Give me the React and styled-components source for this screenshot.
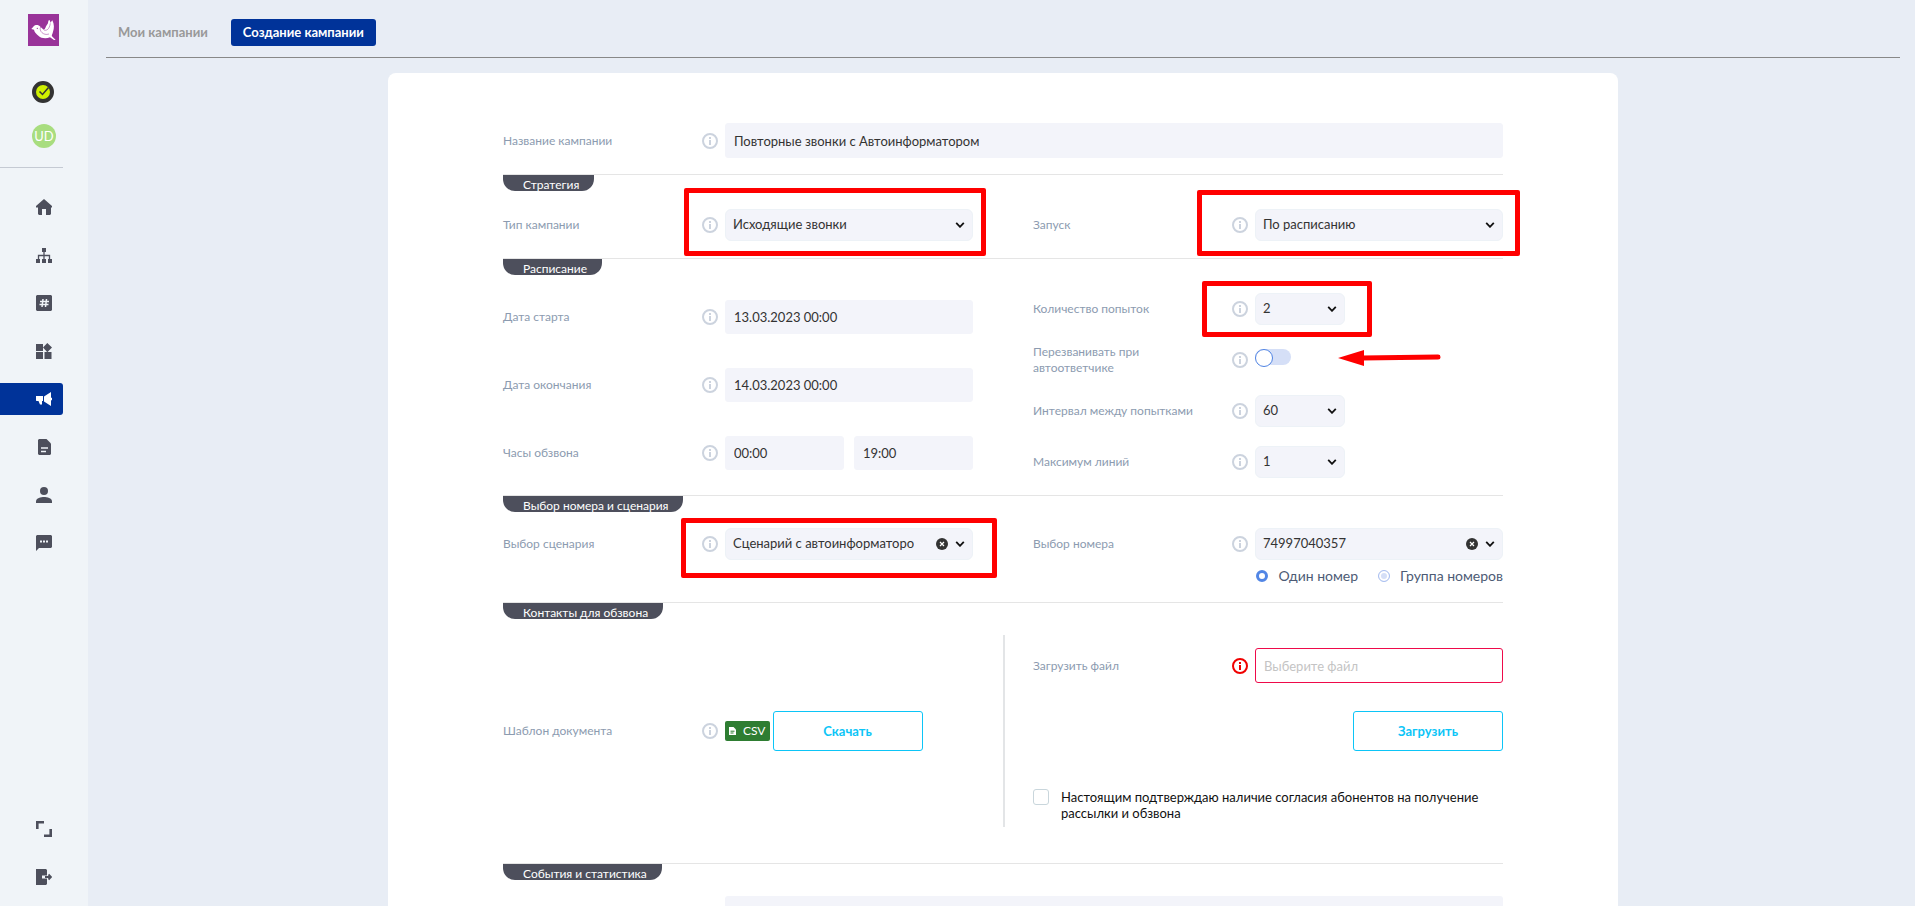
import React, { useState } from "react";
import styled, { createGlobalStyle } from "styled-components";

const App = () => {
  const [name, setName] = useState("Повторные звонки с Автоинформатором");
  const [startDate, setStartDate] = useState("13.03.2023 00:00");
  const [endDate, setEndDate] = useState("14.03.2023 00:00");
  const [from, setFrom] = useState("00:00");
  const [to, setTo] = useState("19:00");

  return (
    <>
      <GlobalStyle />
      <Layout>
        <Sidebar />
        <Main>
          <Tabs>
            <Tab href="#list">Мои кампании</Tab>
            <Tab href="#create" $active>Создание кампании</Tab>
          </Tabs>

          <Card>
            <Field>
              <Label htmlFor="name">Название кампании</Label>
              <Control>
                <Info />
                <Input id="name" $tall value={name} onChange={(e) => setName(e.target.value)} />
              </Control>
            </Field>

            <Section title="Стратегия">
              <Columns $top={18} $bottom={17}>
                <Field>
                  <Label htmlFor="type">Тип кампании</Label>
                  <Control>
                    <Info />
                    <Select id="type" options={["Исходящие звонки", "Входящие звонки"]} />
                    <Frame $top={21} $right={13} $bottom={15} $left={18} />
                  </Control>
                </Field>
                <Field>
                  <Label htmlFor="launch">Запуск</Label>
                  <Control>
                    <Info />
                    <Select id="launch" options={["По расписанию", "Вручную"]} />
                    <Frame $top={19} $right={17} $bottom={15} $left={35} />
                  </Control>
                </Field>
              </Columns>
            </Section>

            <Section title="Расписание">
              <Columns $top={18} $bottom={17}>
                <Stack $gap={34} $pad={7}>
                  <Field>
                    <Label htmlFor="start">Дата старта</Label>
                    <Control>
                      <Info />
                      <Input id="start" value={startDate} onChange={(e) => setStartDate(e.target.value)} />
                    </Control>
                  </Field>
                  <Field>
                    <Label htmlFor="end">Дата окончания</Label>
                    <Control>
                      <Info />
                      <Input id="end" value={endDate} onChange={(e) => setEndDate(e.target.value)} />
                    </Control>
                  </Field>
                  <Field>
                    <Label htmlFor="from">Часы обзвона</Label>
                    <Control>
                      <Info />
                      <Hours>
                        <Input id="from" value={from} onChange={(e) => setFrom(e.target.value)} />
                        <Input aria-label="До" value={to} onChange={(e) => setTo(e.target.value)} />
                      </Hours>
                    </Control>
                  </Field>
                </Stack>

                <Stack $gap={19}>
                  <Field>
                    <Label htmlFor="tries">Количество попыток</Label>
                    <Control $short>
                      <Info />
                      <Select id="tries" options={["2", "3", "4"]} />
                      <Frame $top={12} $right={27} $bottom={12} $left={30} />
                      <Arrow viewBox="0 0 103 16">
                        <path d="M0 8 26 0v16z" />
                        <path d="M24 8 100 7" stroke="#ff0000" strokeWidth="5" strokeLinecap="round" />
                      </Arrow>
                    </Control>
                  </Field>
                  <Field>
                    <Label htmlFor="recall">Перезванивать при автоответчике</Label>
                    <Control>
                      <Info />
                      <Toggle id="recall" type="checkbox" />
                    </Control>
                  </Field>
                  <Field>
                    <Label htmlFor="interval">Интервал между попытками</Label>
                    <Control $short>
                      <Info />
                      <Select id="interval" options={["60", "120"]} />
                    </Control>
                  </Field>
                  <Field>
                    <Label htmlFor="lines">Максимум линий</Label>
                    <Control $short>
                      <Info />
                      <Select id="lines" options={["1", "2"]} />
                    </Control>
                  </Field>
                </Stack>
              </Columns>
            </Section>

            <Section title="Выбор номера и сценария">
              <Columns $top={16} $bottom={14}>
                <Field>
                  <Label htmlFor="scenario">Выбор сценария</Label>
                  <Control>
                    <Info />
                    <Select id="scenario" clearable options={["Сценарий с автоинформатором"]} />
                    <Frame $top={10} $right={24} $bottom={18} $left={21} />
                  </Control>
                </Field>
                <Stack>
                  <Field>
                    <Label htmlFor="phone">Выбор номера</Label>
                    <Control>
                      <Info />
                      <Select id="phone" clearable options={["74997040357"]} />
                    </Control>
                  </Field>
                  <Radios>
                    <RadioLabel>
                      <Radio type="radio" name="numbers" defaultChecked />
                      Один номер
                    </RadioLabel>
                    <RadioLabel>
                      <Radio type="radio" name="numbers" />
                      Группа номеров
                    </RadioLabel>
                  </Radios>
                </Stack>
              </Columns>
            </Section>

            <Section title="Контакты для обзвона">
              <Contacts>
                <Template>
                  <Field>
                    <Label as="span">Шаблон документа</Label>
                    <Control>
                      <Info />
                      <Format>
                        <svg width="7" height="8" viewBox="0 0 7 8">
                          <path d="M0 0h4.500L7 2.500V8H0z" fill="#fff" />
                          <path d="M1.500 4.200h4M1.500 6h3" stroke="#2e7d32" />
                        </svg>
                        CSV
                      </Format>
                      <Button type="button">Скачать</Button>
                    </Control>
                  </Field>
                </Template>
                <Upload>
                  <Field>
                    <Label htmlFor="file">Загрузить файл</Label>
                    <Control>
                      <Info error />
                      <Input id="file" placeholder="Выберите файл" $tall $error />
                    </Control>
                  </Field>
                  <UploadButton type="button">Загрузить</UploadButton>
                  <Agreement>
                    <Checkbox type="checkbox" />
                    <span>Настоящим подтверждаю наличие согласия абонентов на получение рассылки и обзвона</span>
                  </Agreement>
                </Upload>
              </Contacts>
            </Section>

            <Section title="События и статистика">
              <Events>
                <TextArea aria-label="События и статистика" />
              </Events>
            </Section>
          </Card>
        </Main>
      </Layout>
    </>
  );
};

const Sidebar = () => (
  <Side>
    <Logo href="#home" aria-label="Главная">
      <svg width="31" height="32" viewBox="12 12 93 96" fill="#fff">
        <path d="M22 57 28 50C31 44 44 43 49 50L59 59C65 58 64 50 70 43C74 38 71 34 75 30C78 31 79 34 79 38L85 31C91 42 91 56 87 65C86 72 82 76 84 79L95 90 90 90 78 82C66 87 51 85 44 78C37 72 31 66 30 59z" />
        <path d="M50 51C44 62 58 78 75 72M60 60C68 63 76 58 79 40" fill="none" stroke="#993399" strokeWidth="1.500" />
        <circle cx="40" cy="55" r="2" fill="#993399" />
      </svg>
    </Logo>
    <Status type="button" aria-label="Статус">
      <svg width="22" height="22" viewBox="0 0 22 22" fill="none">
        <circle cx="11" cy="11" r="9" fill="#cff000" stroke="#333" strokeWidth="4" />
        <path d="m7.500 10.500 3 3 6-7" stroke="#333" strokeWidth="1.500" />
      </svg>
    </Status>
    <Avatar type="button">UD</Avatar>
    <Nav>
      <NavItem href="#home" aria-label="Главная">
        <Icon><path d="M8 0 16 7v1.500h-1V15l-1 1h-4v-6H6v6H3l-1-1V8.500H0V7z" /></Icon>
      </NavItem>
      <NavItem href="#tree" aria-label="Структура">
        <Icon>
          <path d="M6 1h4v4H6zM0 12h4v4H0zM6 12h4v4H6zM12 12h4v4h-4z" />
          <path d="M8 4v8M2.500 12V8.500h11V12" fill="none" stroke="currentColor" strokeWidth="1.300" />
        </Icon>
      </NavItem>
      <NavItem href="#numbers" aria-label="Номера">
        <Icon>
          <path d="M1 0h14l1 1v14l-1 1H1l-1-1V1z" />
          <path d="M7 4 6 12M10.500 4 9.500 12M4 6.500h9M3.500 9.500h9" fill="none" stroke="#f0f4f8" strokeWidth="1.500" />
        </Icon>
      </NavItem>
      <NavItem href="#widgets" aria-label="Виджеты">
        <Icon><path d="M0 1h7v7H0zM0 9h7v7H0zM8.500 9h7v7h-7zM11.300 0 16 4.600 11.300 9.200 7 4.600z" /></Icon>
      </NavItem>
      <NavItem href="#campaigns" aria-label="Кампании" $active>
        <Icon><path d="M0 5h7v5H6v3.500H4L2.500 10H.5L0 9.500zM8 5.500 15 1v5.500l1 .5v2l-1 .5V15L8 10.500z" /></Icon>
      </NavItem>
      <NavItem href="#reports" aria-label="Отчёты">
        <Icon>
          <path d="M3 0h7.500L15 4.500V15l-1 1H3l-1-1V1z" />
          <path d="M5 9h7M5 12.500h5" fill="none" stroke="#f0f4f8" strokeWidth="1.500" />
        </Icon>
      </NavItem>
      <NavItem href="#profile" aria-label="Профиль">
        <Icon><circle cx="8" cy="4" r="4" /><path d="M8 10c-3 0-8 1-8 4.500V16h16v-1.500C16 11 11 10 8 10z" /></Icon>
      </NavItem>
      <NavItem href="#chat" aria-label="Сообщения">
        <Icon>
          <path d="M1 0h14l1 1v11l-1 1H3l-3 3V1z" />
          <path d="M4 6.500h2M7 6.500h2M10 6.500h2" fill="none" stroke="#f0f4f8" strokeWidth="1.800" />
        </Icon>
      </NavItem>
      <Spacer />
      <NavItem as="button" type="button" aria-label="Развернуть">
        <Icon><path d="M1.300 8V1.300H8M8 14.700h6.700V8" fill="none" stroke="currentColor" strokeWidth="2.600" /></Icon>
      </NavItem>
      <NavItem as="button" type="button" aria-label="Выйти">
        <Icon>
          <path d="M0 0h10l1 1v5.500H6v3h5V15l-1 1H0z" />
          <path d="M9 8h5M12.500 5.500 15 8l-2.500 2.500" fill="none" stroke="currentColor" strokeWidth="1.800" />
        </Icon>
      </NavItem>
    </Nav>
  </Side>
);

const Icon = ({ children }) => (
  <svg width="16" height="16" viewBox="0 0 16 16" fill="currentColor">{children}</svg>
);

const Info = ({ error }) => (
  <InfoIcon $error={error} viewBox="0 0 16 16">
    <circle cx="8" cy="8" r="7" fill="none" stroke="currentColor" strokeWidth="2" />
    <path d="M8 4v2M8 7v5" stroke="currentColor" strokeWidth="2" />
  </InfoIcon>
);

const Section = ({ title, children }) => (
  <SectionBox>
    <SectionTitle>{title}</SectionTitle>
    {children}
  </SectionBox>
);

const Select = ({ id, options, clearable }) => (
  <SelectBox>
    <NativeSelect id={id} $clearable={clearable}>
      {options.map((o) => <option key={o}>{o}</option>)}
    </NativeSelect>
    {clearable && (
      <Clear type="button" aria-label="Очистить">
        <svg width="12" height="12" viewBox="0 0 12 12">
          <circle cx="6" cy="6" r="6" fill="#333" />
          <path d="m4 4 4 4m0-4L4 8" stroke="#fff" strokeWidth="1.200" />
        </svg>
      </Clear>
    )}
    <Chevron viewBox="0 0 10 6">
      <path d="m1.200.8 3.800 4 3.800-4" fill="none" stroke="#111" strokeWidth="1.800" />
    </Chevron>
  </SelectBox>
);


const GlobalStyle = createGlobalStyle`
  * {
    box-sizing: border-box;
  }

  body {
    margin: 0;
    background: #e8edf5;
    font-family: Lato, "Open Sans", sans-serif;
    font-size: 13px;
    line-height: 16px;
  }

  button, input, select, textarea {
    font: inherit;
    margin: 0;
  }

  svg {
    display: block;
  }
`;

const Layout = styled.div`
  display: flex;
  align-items: flex-start;
  height: 100vh;
  overflow: hidden;
`;

const Side = styled.aside`
  display: flex;
  flex-direction: column;
  flex: 0 0 88px;
  height: 100vh;
  padding: 14px 25px 13px 0;
  background: #f0f4f8;
`;

const Logo = styled.a`
  margin-left: 28px;
  width: 31px;
  background: #993399;
`;

const Status = styled.button`
  margin: 35px 0 0 32px;
  width: 22px;
  padding: 0;
  border: 0;
  background: none;
`;

const Avatar = styled.button`
  margin: 21px 0 19px 32px;
  width: 24px;
  height: 24px;
  padding: 0;
  border: 0;
  border-radius: 50%;
  background: #a8dd7f;
  color: #fff;
  line-height: 24px;
`;

const Nav = styled.nav`
  display: flex;
  flex-direction: column;
  flex: 1;
  gap: 16px;
  padding-top: 23px;
  border-top: 1px solid #c5cad3;
`;

const NavItem = styled.a`
  display: flex;
  align-items: center;
  height: 32px;
  padding: 0 0 0 36px;
  border: 0;
  border-radius: 0 3px 3px 0;
  background: ${(p) => (p.$active ? "#003399" : "none")};
  color: ${(p) => (p.$active ? "#fff" : "#4d4f5c")};
`;

const Spacer = styled.div`
  flex: 1;
`;

const Main = styled.main`
  flex: 1;
  height: 100vh;
  padding: 0 15px 0 18px;
  overflow: hidden auto;
  scrollbar-width: none;
`;

const Tabs = styled.nav`
  display: flex;
  gap: 11px;
  padding: 19px 0 11px;
  margin-bottom: 15px;
  border-bottom: 1px solid #888;
`;

const Tab = styled.a`
  padding: 0 12px;
  border-radius: 3px;
  background: ${(p) => (p.$active ? "#003399" : "none")};
  color: ${(p) => (p.$active ? "#fff" : "#999")};
  font-weight: bold;
  line-height: 27px;
  text-decoration: none;
`;

const Card = styled.div`
  max-width: 1230px;
  margin: 0 auto;
  padding: 50px 115px;
  border-radius: 8px;
  background: #fff;
`;

const SectionBox = styled.section`
  border-top: 1px solid #e5e5e5;

  div + & {
    margin-top: 16px;
  }
`;

const SectionTitle = styled.h2`
  width: fit-content;
  height: 16px;
  margin: 0;
  padding: 2px 15px 0 20px;
  border-radius: 0 0 12px 12px;
  background: #4d4f5c;
  color: #fff;
  font-size: 12px;
  font-weight: normal;
`;

const Columns = styled.div`
  display: grid;
  grid-template-columns: repeat(2, minmax(0, 1fr));
  gap: 60px;
  align-items: start;
  padding: ${(p) => p.$top}px 0 ${(p) => p.$bottom}px;
`;

const Stack = styled.div`
  display: flex;
  flex-direction: column;
  gap: ${(p) => p.$gap || 0}px;
  padding-top: ${(p) => p.$pad || 0}px;
`;

const Field = styled.div`
  display: flex;
  align-items: center;
`;

const Label = styled.label`
  flex: 0 0 199px;
  padding-right: 20px;
  color: #8c9bb0;
  font-size: 12px;
`;

const Control = styled.div`
  position: relative;
  display: flex;
  align-items: center;
  gap: 7px;
  flex: ${(p) => (p.$short ? "0 0 113px" : "1")};
  min-width: 0;
  min-height: 32px;
`;

const InfoIcon = styled.svg`
  flex: 0 0 16px;
  height: 16px;
  color: ${(p) => (p.$error ? "#f00000" : "#ccd3de")};
`;

const Input = styled.input`
  flex: 1;
  min-width: 0;
  height: ${(p) => (p.$tall ? 35 : 34)}px;
  padding: 0 8px;
  border: 1px solid ${(p) => (p.$error ? "#ee0a4a" : "#f3f4fa")};
  border-radius: 3px;
  background: ${(p) => (p.$error ? "#fff" : "#f3f4fa")};
  color: #333;

  &::placeholder {
    color: #c4c4c4;
  }
`;

const Hours = styled.div`
  display: flex;
  flex: 1;
  gap: 10px;
  min-width: 0;
`;

const SelectBox = styled.div`
  display: flex;
  align-items: center;
  flex: 1;
  min-width: 0;
  height: 32px;
  padding-right: 7px;
  border: 1px solid #edf2f7;
  border-radius: 6px;
  background: #f3f4fa;
`;

const NativeSelect = styled.select`
  appearance: none;
  flex: 1;
  min-width: 0;
  height: 30px;
  margin-right: ${(p) => (p.$clearable ? 22 : 0)}px;
  padding: 0 0 2px 7px;
  border: 0;
  background: none;
  color: #333;
`;

const Clear = styled.button`
  padding: 0;
  margin-right: 7px;
  border: 0;
  background: none;
`;

const Chevron = styled.svg`
  flex: 0 0 10px;
  height: 6px;
  pointer-events: none;
`;

const Toggle = styled.input`
  appearance: none;
  width: 36px;
  height: 16px;
  margin-bottom: 6px;
  border-radius: 8px;
  background: #d5dff7;

  &::before {
    content: "";
    display: block;
    width: 16px;
    height: 16px;
    border: 1px solid #4f83e3;
    border-radius: 50%;
    background: #fff;
  }

  &:checked::before {
    margin-left: 20px;
  }
`;

const Radios = styled.div`
  display: flex;
  justify-content: flex-end;
  gap: 20px;
  padding: 8px 0 4px;
`;

const RadioLabel = styled.label`
  display: flex;
  align-items: center;
  gap: 10px;
  color: #4d5b75;
  font-size: 14px;
`;

const Radio = styled.input`
  appearance: none;
  width: 12px;
  height: 12px;
  border: 1px solid #a9bff0;
  border-radius: 50%;
  background: #d5dff7;
  box-shadow: inset 0 0 0 2px #fff;

  &:checked {
    border: 3px solid #5286e5;
    background: #fff;
  }
`;

const Contacts = styled.div`
  display: grid;
  grid-template-columns: repeat(2, minmax(0, 1fr));
  padding: 16px 0 36px;
`;

const Template = styled.div`
  display: grid;
  align-items: center;
`;

const Upload = styled.div`
  display: flex;
  flex-direction: column;
  padding: 13px 0 6px 28px;
  border-left: 2px solid #e3e5e7;
`;

const Format = styled.span`
  display: flex;
  align-items: center;
  gap: 7px;
  height: 20px;
  margin-right: -4px;
  padding: 0 4px;
  border-radius: 2px;
  background: #2e7d32;
  color: #fff;
  font-size: 12px;
`;

const Button = styled.button`
  width: 150px;
  height: 40px;
  border: 1px solid #0cc5f7;
  border-radius: 3px;
  background: #fff;
  color: #0cc5f7;
  font-weight: bold;
`;

const UploadButton = styled(Button)`
  align-self: flex-end;
  margin: 28px 0 38px;
`;

const Agreement = styled.label`
  display: flex;
  gap: 12px;
  color: #111;
`;

const Checkbox = styled.input`
  appearance: none;
  flex: 0 0 16px;
  height: 16px;
  border: 1px solid #c9d6dc;
  border-radius: 3px;
  background: #fff;
`;

const Events = styled.div`
  display: flex;
  padding: 16px 0 0 222px;
`;

const TextArea = styled.textarea`
  flex: 1;
  height: 80px;
  padding: 8px;
  border: 0;
  border-radius: 3px;
  background: #f3f4fa;
  color: #333;
  resize: none;
`;

// red marks over the controls that the guide talks about
const Frame = styled.div`
  position: absolute;
  top: -${(p) => p.$top}px;
  right: -${(p) => p.$right}px;
  bottom: -${(p) => p.$bottom}px;
  left: -${(p) => p.$left}px;
  border: 5px solid #ff0000;
  border-radius: 2px;
  pointer-events: none;
`;

const Arrow = styled.svg`
  position: absolute;
  top: 57px;
  left: 106px;
  width: 103px;
  height: 16px;
  fill: #ff0000;
`;

export default App;
